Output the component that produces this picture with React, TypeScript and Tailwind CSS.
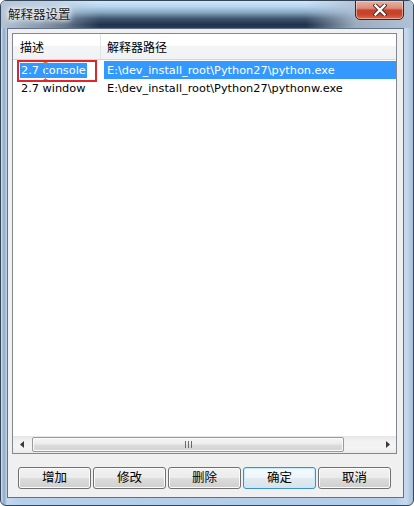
import React from "react";

const font = "font-['Liberation_Sans','Noto_Sans_CJK_SC',sans-serif]";
const listFont = "font-['DejaVu_Sans','Noto_Sans_CJK_SC',sans-serif] text-[11.3px]";

function Btn({ label, focused }: { label: string; focused?: boolean }) {
  return (
    <button
      className={
        "w-[73px] h-[22px] rounded-[3px] border text-[12.5px] leading-none text-black flex items-center justify-center " +
        (focused
          ? "border-[#3c8fd0] bg-[linear-gradient(180deg,#f4f9fc_0%,#eef5f9_50%,#e2ebf1_50%,#d6e2ea_100%)] shadow-[inset_0_0_0_1px_#c4ecfc]"
          : "border-[#707070] bg-[linear-gradient(180deg,#f2f2f2_0%,#ebebeb_50%,#dddddd_50%,#cfcfcf_100%)] shadow-[inset_0_0_0_1px_#fbfbfb]")
      }
    >
      {label}
    </button>
  );
}

export default function App() {
  return (
    <div className={"w-[414px] h-[506px] bg-white " + font}>
      <div className="w-[414px] h-[506px] rounded-[6px] border border-[#34465a] bg-[linear-gradient(90deg,#d2e2f2_0px,#8ea8c4_3px,#c4d8ee_6px,#b7cfe8_20px,#b3cce7_394px,#c6daf0_405px,#a9bfd6_412px)] flex flex-col overflow-hidden">
        {/* title bar */}
        <div className="h-[27px] flex items-start justify-between bg-[linear-gradient(90deg,#b4c4d5_0%,rgba(180,196,213,0.6)_12%,rgba(180,196,213,0)_24%,rgba(180,196,213,0)_74%,rgba(176,192,210,0.85)_86%,#b0c2d6_100%),linear-gradient(180deg,#d6e7f6_0%,#b3d3ee_22%,#8aa8c4_42%,#3f5770_65%,#1f3249_88%,#2a3e56_100%)]">
          <div className="pl-[7px] pt-[6px] text-[12.5px] leading-[17px] text-[#1a1a1a] [text-shadow:0_0_6px_#ffffff,0_0_3px_#ffffff,0_0_10px_#ffffff]">
            解释器设置
          </div>
          <div className="mr-[9px] w-[49px] h-[20px] -mt-[1px] rounded-b-[5px] border border-[#3b2623] bg-[linear-gradient(180deg,#eab2a4_0%,#d98d7b_40%,#c4412a_52%,#c8452d_75%,#dc6a4d_100%)] shadow-[inset_0_0_0_1px_rgba(255,220,210,0.55)] flex items-center justify-center">
            <svg width="14" height="12" viewBox="0 0 14 12">
              <path d="M2.5 1.5 L11.5 10.5 M11.5 1.5 L2.5 10.5" stroke="#4a2a26" strokeWidth="4.2" strokeLinecap="square" />
              <path d="M2.5 1.5 L11.5 10.5 M11.5 1.5 L2.5 10.5" stroke="#ffffff" strokeWidth="2.4" strokeLinecap="square" />
            </svg>
          </div>
        </div>
        {/* client area */}
        <div className="ml-[6px] mr-[9px] mb-[7px] border border-[#5f7288] bg-[#f0f0f0] flex flex-col pl-[4px] pr-[6px] pt-[4px]">
          {/* list view */}
          <div className="relative h-[421px] border border-[#828790] bg-white flex flex-col">
            {/* header */}
            <div className="h-[26px] flex border-b border-[#d5d5d5] bg-[linear-gradient(180deg,#ffffff_0%,#ffffff_45%,#f3f4f6_50%,#f1f2f4_100%)] text-[12px] text-black">
              <div className="w-[88px] border-r border-[#e2e3e5] pl-[7px] pt-[2px] flex items-center">描述</div>
              <div className="pl-[6px] pt-[2px] flex items-center">解释器路径</div>
            </div>
            {/* rows */}
            <div className={"pt-[1px] leading-[17px] " + listFont}>
              <div className="h-[18px] flex items-center">
                <div className="w-[89px] h-full flex items-center pl-[7px]">
                  <span className="bg-[#3399ff] text-white px-[1px] leading-[15px]">2.7 console</span>
                </div>
                <div className="flex-1 h-full ml-[2px] bg-[#3399ff] text-white pl-[3px] flex items-center">
                  E:\dev_install_root\Python27\python.exe
                </div>
              </div>
              <div className="h-[18px] flex items-center text-black">
                <div className="w-[89px] pl-[8px]">2.7 window</div>
                <div className="pl-[5px]">E:\dev_install_root\Python27\pythonw.exe</div>
              </div>
            </div>
            <div className="flex-1" />
            {/* horizontal scrollbar */}
            <div className="h-[17px] flex items-center bg-[linear-gradient(180deg,#e6e6e6_0%,#f2f2f2_30%,#f4f4f4_70%,#eaeaea_100%)]">
              <div className="w-[17px] h-full flex items-center justify-center">
                <svg width="4" height="7" viewBox="0 0 4 7"><path d="M4 0 L0 3.5 L4 7 Z" fill="#3a3a3a" /></svg>
              </div>
              <div className="ml-[2px] w-[312px] h-[15px] rounded-[2px] border border-[#9a9a9a] bg-[linear-gradient(180deg,#f6f6f6_0%,#ececec_45%,#dcdcdc_55%,#d2d2d2_100%)] shadow-[inset_0_0_0_1px_#fafafa] flex items-center justify-center">
                <div className="flex gap-[2px]">
                  <div className="w-[1px] h-[7px] bg-[#6a6a6a]" />
                  <div className="w-[1px] h-[7px] bg-[#6a6a6a]" />
                  <div className="w-[1px] h-[7px] bg-[#6a6a6a]" />
                </div>
              </div>
              <div className="flex-1" />
              <div className="w-[17px] h-full flex items-center justify-center">
                <svg width="4" height="7" viewBox="0 0 4 7"><path d="M0 0 L4 3.5 L0 7 Z" fill="#3a3a3a" /></svg>
              </div>
            </div>
            {/* red annotation box */}
            <div className="absolute left-[4px] top-[26px] w-[80px] h-[22px] border-2 border-[#e0262b]">
              <svg className="absolute left-[24px] top-[0px]" width="5" height="18" viewBox="0 0 5 18">
                <path d="M0.5 0.5 H4.5 M2.5 0.5 V17.5 M0.5 17.5 H4.5" stroke="#c9822f" strokeWidth="1" fill="none" />
              </svg>
            </div>
          </div>
          {/* buttons */}
          <div className="mt-[13px] mb-[8px] pl-[6px] flex gap-[2px]">
            <Btn label="增加" />
            <Btn label="修改" />
            <Btn label="删除" />
            <Btn label="确定" focused />
            <Btn label="取消" />
          </div>
        </div>
      </div>
    </div>
  );
}
